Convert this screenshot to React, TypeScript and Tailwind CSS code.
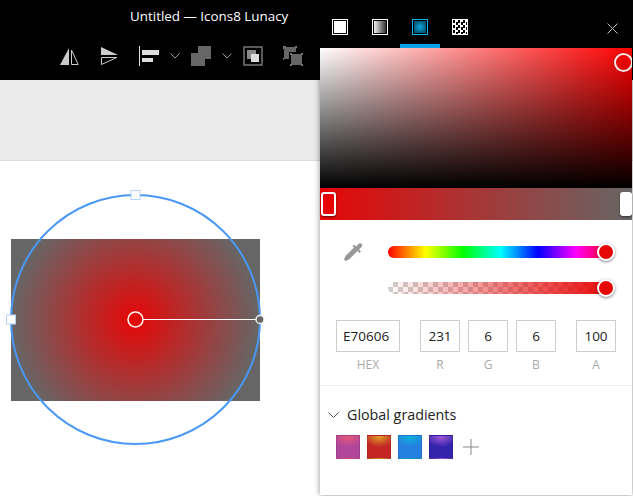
import React from 'react';

const font = { fontFamily: '"Open Sans", "Noto Sans", sans-serif' };

const Chevron = () => (
  <svg width="10" height="6" viewBox="0 0 10 6" fill="none" stroke="#999" strokeWidth="1"><path d="M0.5 0.5 5 5 9.5 0.5" /></svg>
);

const Toolbar = () => (
  <div className="flex items-center pl-[60px] mt-[20px] h-5">
    <svg width="20" height="20" viewBox="0 0 20 20">
      <path d="M9 2v17H0z" fill="#ccc" />
      <path d="M11.5 4v14.5h6.7z" fill="none" stroke="#ccc" />
    </svg>
    <svg className="ml-5" width="20" height="20" viewBox="0 0 20 20">
      <path d="M1 1 18 9H1z" fill="#ccc" />
      <path d="M1.5 11.5h15.300L1.500 18.500z" fill="none" stroke="#ccc" />
    </svg>
    <svg className="ml-[19px]" width="20" height="20" viewBox="0 0 20 20" fill="#ddd">
      <rect x="0" y="0" width="1" height="20" />
      <rect x="3" y="4" width="17" height="5" />
      <rect x="3" y="12" width="11" height="4" />
    </svg>
    <div className="ml-[11px] flex"><Chevron /></div>
    <svg className="ml-[11px]" width="20" height="20" viewBox="0 0 20 20">
      <path d="M7 0h13v13h-6v7H0V7h7z" fill="#666" />
    </svg>
    <div className="ml-[11px] flex"><Chevron /></div>
    <svg className="ml-[11px]" width="20" height="20" viewBox="0 0 20 20">
      <rect x="1" y="1" width="18" height="18" fill="none" stroke="#777" strokeWidth="1.500" />
      <rect x="4" y="4" width="9" height="9" fill="#888" />
      <rect x="8" y="8" width="8" height="8" fill="#ddd" />
    </svg>
    <svg className="ml-5" width="20" height="20" viewBox="0 0 20 20">
      <path d="M1 1h12v5H6v7H1z" fill="#666" />
      <rect x="8" y="8" width="11" height="11" fill="#666" />
      <path d="M0 0h3v1H1v2H0zM12 0h2v2h-1V1h-1zM0 12h1v2H0zM7 7h2v1H8v1H7zM18 7h2v2h-1V8h-1zM7 18h1v1h1v1H7zM19 18h1v2h-2v-1h1z" fill="#777" />
    </svg>
  </div>
);

const tabBox = 'w-4 h-4 border border-white';

const PanelTabs = () => (
  <div className="h-10 bg-black flex shrink-0">
    <div className="w-10 flex justify-center pt-[11px]">
      <div className="w-4 h-4 bg-white border border-white shadow-[inset_0_0_0_1px_#000]" />
    </div>
    <div className="w-10 flex justify-center pt-[11px]">
      <div className={`${tabBox} bg-[linear-gradient(to_right,#fff,#222)] shadow-[inset_0_0_0_1px_#000]`} />
    </div>
    <div className="w-10 flex justify-center pt-[11px] border-b-4 border-[#0aa0ea]">
      <div className="w-4 h-4 border border-[#0ab4f0] bg-[radial-gradient(circle,#08a8e0,#032838)] shadow-[inset_0_0_0_1px_#000]" />
    </div>
    <div className="w-10 flex justify-center pt-[11px]">
      <div className={`${tabBox} bg-[repeating-conic-gradient(#fff_0_25%,#000_0_50%)] bg-[length:5px_5px]`} />
    </div>
    <div className="ml-auto w-10 flex items-center justify-center">
      <svg width="11" height="11" viewBox="0 0 11 11" stroke="#bbb" strokeWidth="1"><path d="M.5.5l10 10M10.500.5l-10 10" /></svg>
    </div>
  </div>
);

const ColorField = ({ value, label, width, align = 'text-center' }: { value: string; label: string; width: string; align?: string }) => (
  <div className={`${width} flex flex-col items-center`}>
    <div className={`w-full h-8 border border-[#ccc] text-[13.5px] leading-[30px] text-[#222] ${align}`}>{value}</div>
    <div className="mt-[5px] text-[12px] leading-4 text-[#aaa]">{label}</div>
  </div>
);

const Thumb = () => (
  <div className="absolute right-[-2px] top-[-3px] w-[18px] h-[18px] rounded-full bg-[#e70606] border-2 border-white shadow-[0_1px_3px_rgba(0,0,0,0.5)]" />
);

const swatches = [
  'bg-[radial-gradient(ellipse_70%_50%_at_50%_0%,#ea5a78,#b0479b)]',
  'bg-[radial-gradient(ellipse_70%_50%_at_50%_0%,#e0a428,#c42626)]',
  'bg-[radial-gradient(ellipse_70%_50%_at_50%_0%,#0cb4dc,#2680e0)]',
  'bg-[radial-gradient(ellipse_70%_50%_at_50%_0%,#a85cd8,#3424ac)]',
];

const ColorPanel = () => (
  <div className="absolute left-[320px] top-2 w-[312px] h-[487px] bg-white flex flex-col shadow-[0_0_6px_rgba(0,0,0,0.45)]">
    <PanelTabs />
    <div className="relative h-[140px] shrink-0 overflow-hidden bg-[linear-gradient(to_bottom,transparent,#000),linear-gradient(to_right,#fff,#f00)]">
      <div className="absolute left-[294px] top-[5px] w-[19px] h-[19px] rounded-full border-2 border-[#f2e6e6] shadow-[0_0_2px_rgba(0,0,0,0.4)]" />
    </div>
    <div className="relative h-8 shrink-0 bg-[linear-gradient(to_right,#e70606,#666)]">
      <div className="absolute left-[1px] top-[4px] w-[15px] h-6 rounded-[3px] bg-[#e70606] border-2 border-white shadow-[0_1px_2px_rgba(0,0,0,0.5)]" />
      <div className="absolute right-0 top-[4px] w-3 h-6 rounded-[3px] bg-white shadow-[0_1px_2px_rgba(0,0,0,0.5)]" />
    </div>
    <div className="flex mt-[21px] pl-[22px]">
      <svg className="mt-0" width="22" height="22" viewBox="0 0 22 22" fill="#999">
        <path d="M13 5.500 16.500 9 7 18.500l-3.500 1.500-1.500-1.500L3.500 15z" />
        <path d="M12 3.500l2 2 3-3a2.200 2.200 0 0 1 3 3l-3 3 2 2-1.500 1.500-7-7z" />
      </svg>
      <div className="ml-[24px] w-[225px] flex flex-col gap-6 pt-[5px]">
        <div className="relative h-3 rounded-full bg-[linear-gradient(to_right,#f00,#ff0,#0f0,#0ff,#00f,#f0f,#f00)]">
          <Thumb />
        </div>
        <div className="relative h-3 rounded-full bg-[repeating-conic-gradient(#d0d0d0_0_25%,#fff_0_50%)] bg-[length:10px_10px]">
          <div className="absolute inset-0 rounded-full bg-[linear-gradient(to_right,transparent,#e70606)]" />
          <Thumb />
        </div>
      </div>
    </div>
    <div className="flex mt-[26px] pl-4">
      <ColorField value="E70606" label="HEX" width="w-16" align="text-left pl-[6px]" />
      <div className="ml-5 flex gap-2">
        <ColorField value="231" label="R" width="w-10" />
        <ColorField value="6" label="G" width="w-10" />
        <ColorField value="6" label="B" width="w-10" />
      </div>
      <div className="ml-5">
        <ColorField value="100" label="A" width="w-10" />
      </div>
    </div>
    <div className="mt-[12px] border-t border-[#eee]" />
    <div className="flex items-center pl-2 mt-[19px] h-5">
      <svg width="11" height="7" viewBox="0 0 11 7" fill="none" stroke="#555"><path d="M.5.5l5 5 5-5" /></svg>
      <span className="ml-2 text-[14.3px] text-[#222]">Global gradients</span>
    </div>
    <div className="flex items-center gap-[7px] pl-4 mt-[10px]">
      {swatches.map((bg) => (
        <div key={bg} className={`w-6 h-6 border border-black/10 ${bg}`} />
      ))}
      <svg className="ml-[3px]" width="16" height="16" viewBox="0 0 16 16" stroke="#888"><path d="M8 0v16M0 8h16" /></svg>
    </div>
  </div>
);

const CanvasDrawing = () => (
  <svg className="absolute left-0 top-[160px]" width="320" height="336" viewBox="0 160 320 336">
    <defs>
      <radialGradient id="fillGrad" gradientUnits="userSpaceOnUse" cx="135" cy="320" r="124.500">
        <stop offset="0" stopColor="#e70606" />
        <stop offset="1" stopColor="#666666" />
      </radialGradient>
    </defs>
    <rect x="11" y="239" width="249" height="162" fill="url(#fillGrad)" />
    <circle cx="135.500" cy="319.500" r="124.500" fill="none" stroke="#4a98f5" strokeWidth="2" />
    <rect x="131" y="190.500" width="9" height="9" fill="#fff" stroke="#b4d4fa" />
    <rect x="6.500" y="315" width="9" height="9" fill="#fff" stroke="#b4d4fa" />
    <line x1="143" y1="319.500" x2="256" y2="319.500" stroke="#fff" strokeWidth="1" />
    <circle cx="135.500" cy="319.500" r="7.500" fill="#e70606" stroke="#fff" strokeWidth="1.500" />
    <circle cx="260" cy="319.500" r="4" fill="#666" stroke="#eee" strokeWidth="1.500" />
  </svg>
);

export default function App() {
  return (
    <div className="relative w-[633px] h-[496px] overflow-hidden flex flex-col bg-white" style={font}>
      <div className="h-20 bg-black shrink-0">
        <div className="pl-[130px] pt-[6px] text-[13.4px] leading-5 text-white">Untitled — Icons8 Lunacy</div>
        <Toolbar />
      </div>
      <div className="h-[81px] bg-[#ebebeb] border-b border-[#dcdcdc] shrink-0" />
      <div className="flex-1" />
      <CanvasDrawing />
      <ColorPanel />
    </div>
  );
}
